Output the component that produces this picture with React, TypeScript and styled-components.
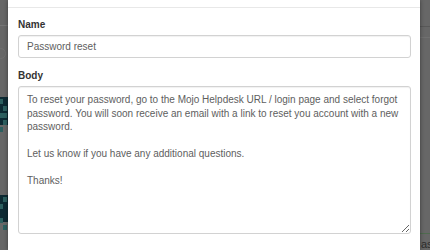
import styled, { createGlobalStyle } from 'styled-components';

const GlobalStyle = createGlobalStyle`
  html, body {
    margin: 0;
    padding: 0;
    height: 250px;
    overflow: hidden;
    background: #666;
  }

  * {
    box-sizing: border-box;
  }
`;

const Page = styled.div`
  display: flex;
  flex-direction: row;
  width: 430px;
  height: 250px;
  background-color: #676767;
  font-family: 'Liberation Sans', Arial, sans-serif;
`;

const Gutter = styled.div<{ $width: number }>`
  flex: 0 0 ${(p) => p.$width}px;
  display: flex;
  flex-direction: column;
  overflow: hidden;
`;

const Rule = styled.div<{ $top: number; $color: string; $size?: number }>`
  margin-top: ${(p) => p.$top}px;
  height: ${(p) => p.$size || 1}px;
  background-color: ${(p) => p.$color};
`;

const Ring = styled.div`
  margin: 22px 0 0 -5px;
  width: 11px;
  height: 11px;
  border-radius: 50%;
  border: 1px solid #707070;
`;

const Tiles = styled.div<{ $top: number; $height: number }>`
  margin-top: ${(p) => p.$top}px;
  height: ${(p) => p.$height}px;
  background-color: #0d2a33;
  display: grid;
  grid-template-columns: 3px 4px;
  grid-auto-rows: 5px;
  gap: 2px 0;
  padding: 2px 0;
`;

const Tile = styled.div<{ $on?: boolean }>`
  background-color: ${(p) => (p.$on ? '#2c5f5f' : 'transparent')};
`;

const GhostText = styled.div`
  margin-top: 5px;
  font-size: 11px;
  line-height: 12px;
  color: #2d2d2d;
  padding-left: 1px;
  white-space: nowrap;
`;

const Modal = styled.div`
  flex: 0 0 412px;
  display: flex;
  flex-direction: column;
  background-color: #ffffff;
  box-shadow: 0 0 4px rgba(0, 0, 0, 0.45);
  position: relative;
  z-index: 1;
`;

const HeaderEdge = styled.div`
  height: 8px;
  border-bottom: 1px solid #e8e8e8;
`;

const Body = styled.div`
  display: flex;
  flex-direction: column;
  padding: 10px 9px 0 10px;
`;

const Label = styled.label`
  font-size: 10px;
  font-weight: 700;
  line-height: 14px;
  color: #333333;
  margin-bottom: 3px;
`;

const Input = styled.input`
  width: 393px;
  height: 23px;
  padding: 0 8px;
  margin: 0 0 11px;
  border: 1px solid #d2d2d2;
  border-radius: 3px;
  box-shadow: inset 0 1px 1px rgba(0, 0, 0, 0.06);
  font-family: 'Liberation Sans', Arial, sans-serif;
  font-size: 10px;
  color: #5e5e5e;
  outline: none;
`;

const TextArea = styled.textarea`
  width: 393px;
  height: 148px;
  padding: 6px 8px;
  margin: 0;
  border: 1px solid #d2d2d2;
  border-radius: 3px;
  box-shadow: inset 0 1px 1px rgba(0, 0, 0, 0.06);
  font-family: 'Liberation Sans', Arial, sans-serif;
  font-size: 10px;
  line-height: 13.5px;
  color: #5e5e5e;
  resize: vertical;
  outline: none;
  overflow: hidden;
`;

const bodyText =
  'To reset your password, go to the Mojo Helpdesk URL / login page and select forgot password. You will soon receive an email with a link to reset you account with a new password.\n\nLet us know if you have any additional questions.\n\nThanks!';

const tilePattern = [true, false, false, true, true, true, false, true, true, false];

export default function App() {
  return (
    <>
      <GlobalStyle />
      <Page>
        <Gutter $width={8}>
          <Rule $top={25} $color="#767676" />
          <Ring />
          <Tiles $top={38} $height={28}>
            {tilePattern.map((on, i) => (
              <Tile key={i} $on={on} />
            ))}
          </Tiles>
          <Tiles $top={70} $height={27}>
            {tilePattern.map((on, i) => (
              <Tile key={i} $on={!on} />
            ))}
          </Tiles>
        </Gutter>

        <Modal>
          <HeaderEdge />
          <Body>
            <Label>Name</Label>
            <Input defaultValue="Password reset" />
            <Label>Body</Label>
            <TextArea defaultValue={bodyText} />
          </Body>
        </Modal>

        <Gutter $width={10}>
          <Rule $top={26} $color="#585858" $size={2} />
          <Rule $top={10} $color="#707070" />
          <Rule $top={196} $color="#4f6b4f" />
          <GhostText>as</GhostText>
        </Gutter>
      </Page>
    </>
  );
}
